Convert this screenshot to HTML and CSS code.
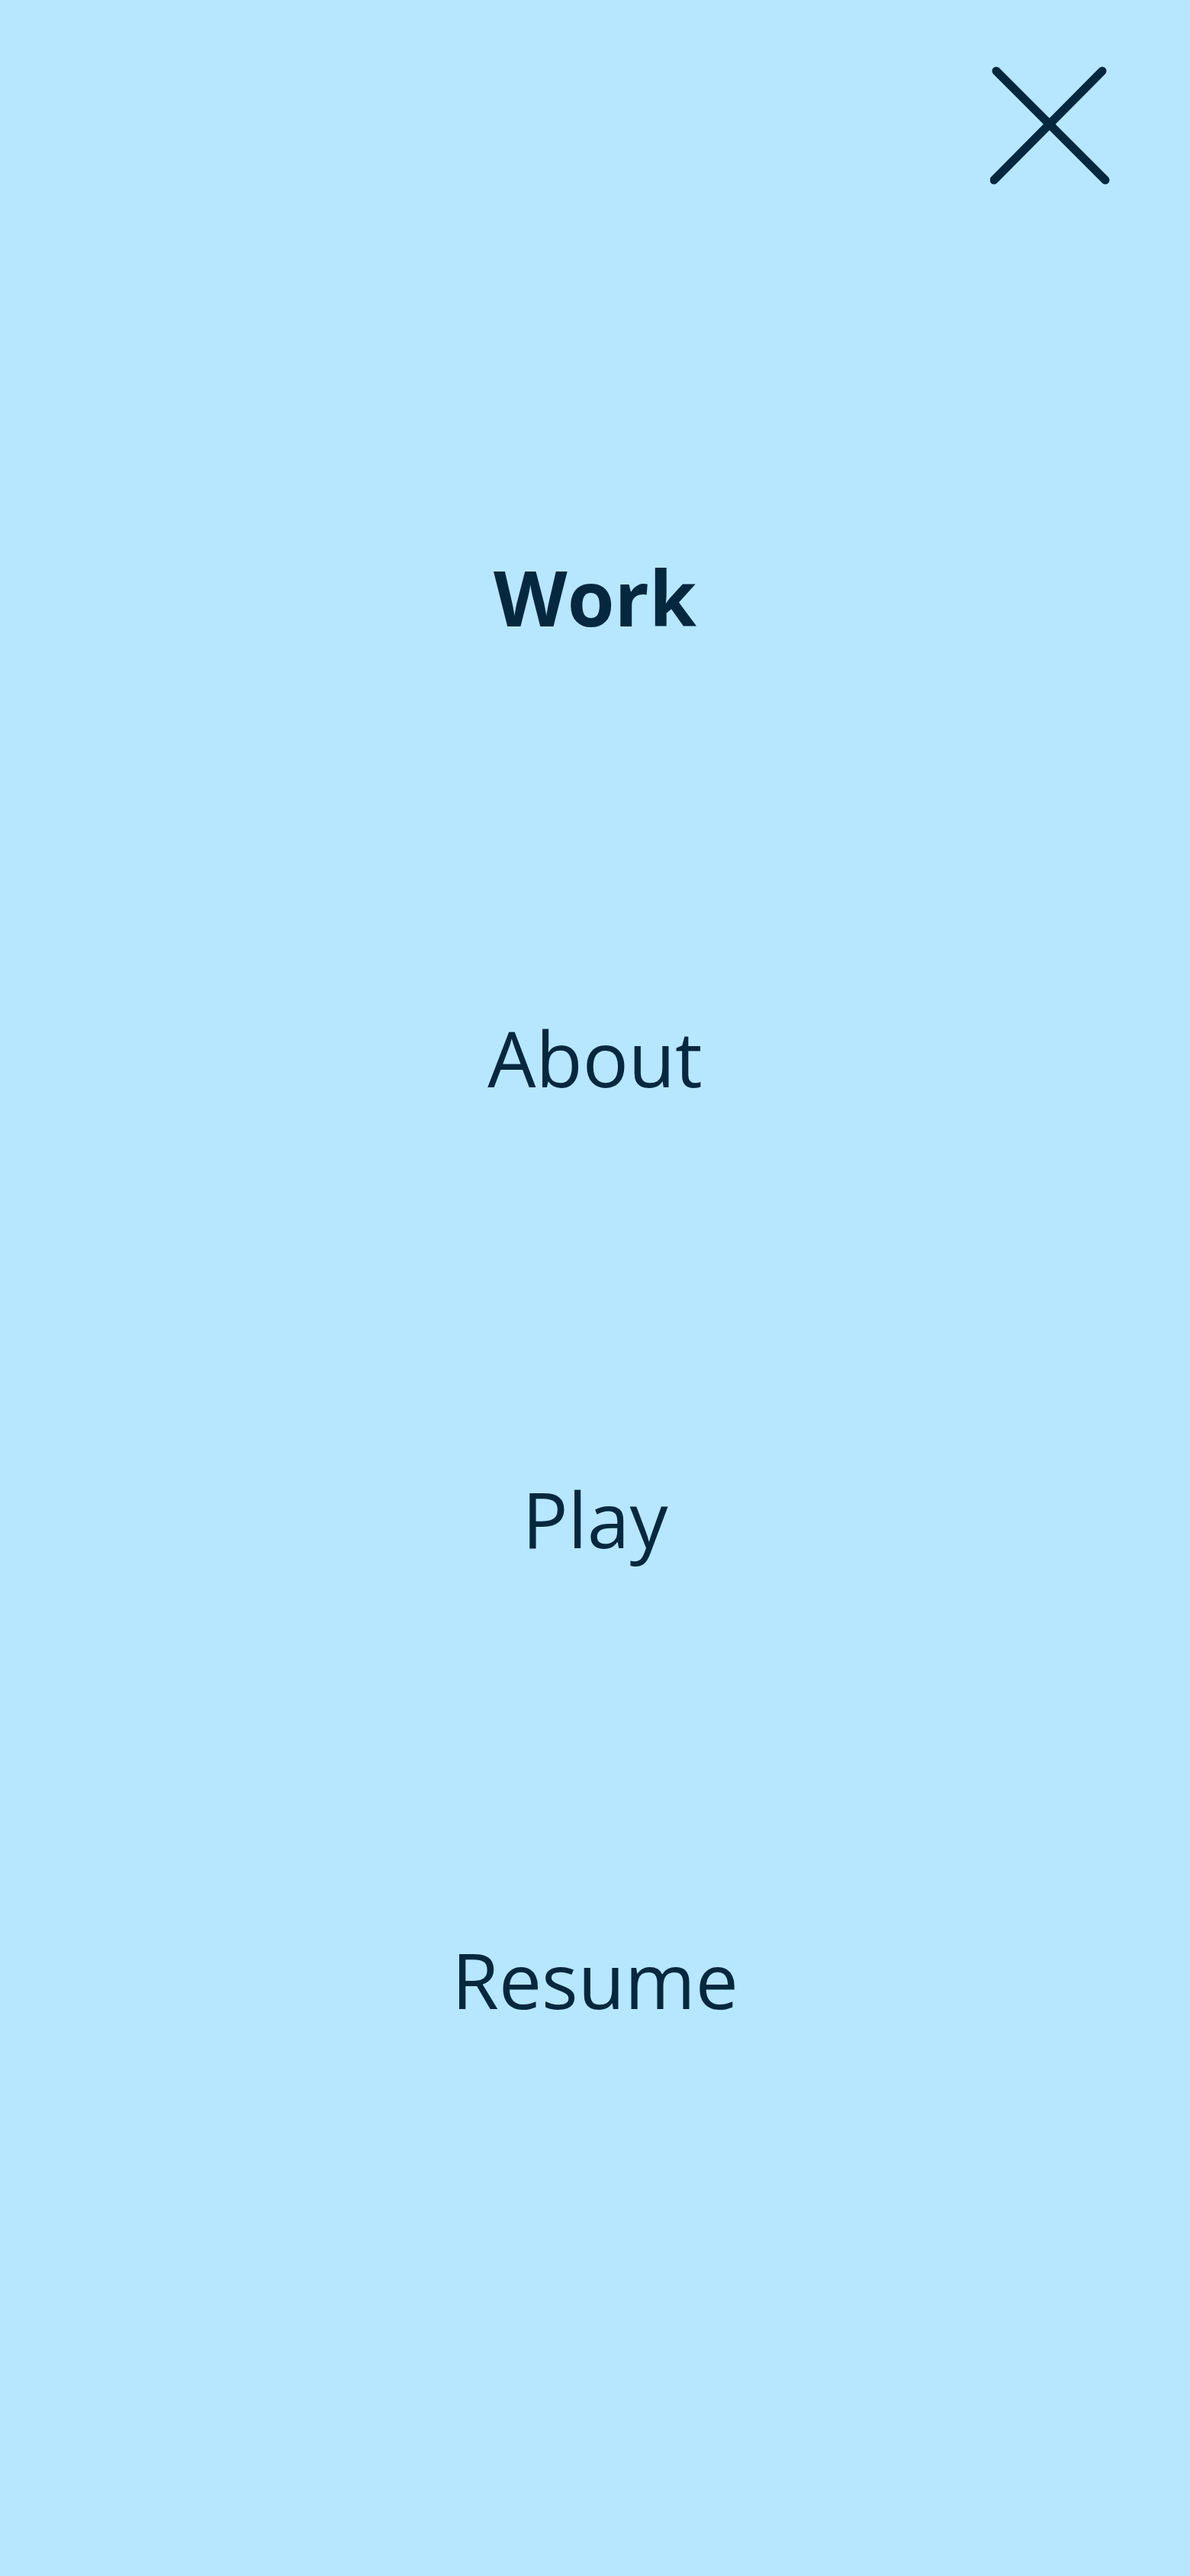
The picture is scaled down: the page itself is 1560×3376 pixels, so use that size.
FILE: index.html
```html
<!DOCTYPE html>
<html lang="en">
<head>
<meta charset="utf-8">
<title>Menu</title>
<link rel="stylesheet" href="styles.css">
</head>
<body>
<div class="menu">
  <header class="menu-header">
    <button class="close-btn" aria-label="Close menu">
      <svg width="160" height="157" viewBox="0 0 160 157" fill="none" stroke="#06283f" stroke-width="11" stroke-linecap="round">
        <line x1="8" y1="7" x2="151" y2="150"/>
        <line x1="147" y1="7" x2="5" y2="150"/>
      </svg>
    </button>
  </header>
  <nav class="menu-nav">
    <a class="menu-link active" href="#">Work</a>
    <a class="menu-link" href="#">About</a>
    <a class="menu-link" href="#">Play</a>
    <a class="menu-link" href="#">Resume</a>
  </nav>
</div>
</body>
</html>
```
FILE: styles.css
```css
html, body {
  margin: 0;
  padding: 0;
  background: #b7e7fe;
}
body {
  font-family: "Open Sans", "Noto Sans", sans-serif;
  color: #06283f;
}
.menu {
  min-height: 3376px;
  display: flex;
  flex-direction: column;
}
.menu-header {
  height: 480px;
  box-sizing: border-box;
  padding: 86px 102px 0 0;
  display: flex;
  justify-content: flex-end;
  align-items: flex-start;
}
.close-btn {
  border: 0;
  background: none;
  padding: 0;
  margin: 0;
  cursor: pointer;
  display: block;
  line-height: 0;
}
.menu-nav {
  display: flex;
  flex-direction: column;
}
.menu-link {
  display: block;
  height: 604px;
  line-height: 604px;
  text-align: center;
  font-size: 100px;
  font-weight: 400;
  color: #06283f;
  text-decoration: none;
}
.menu-link.active {
  font-weight: 700;
}
```
